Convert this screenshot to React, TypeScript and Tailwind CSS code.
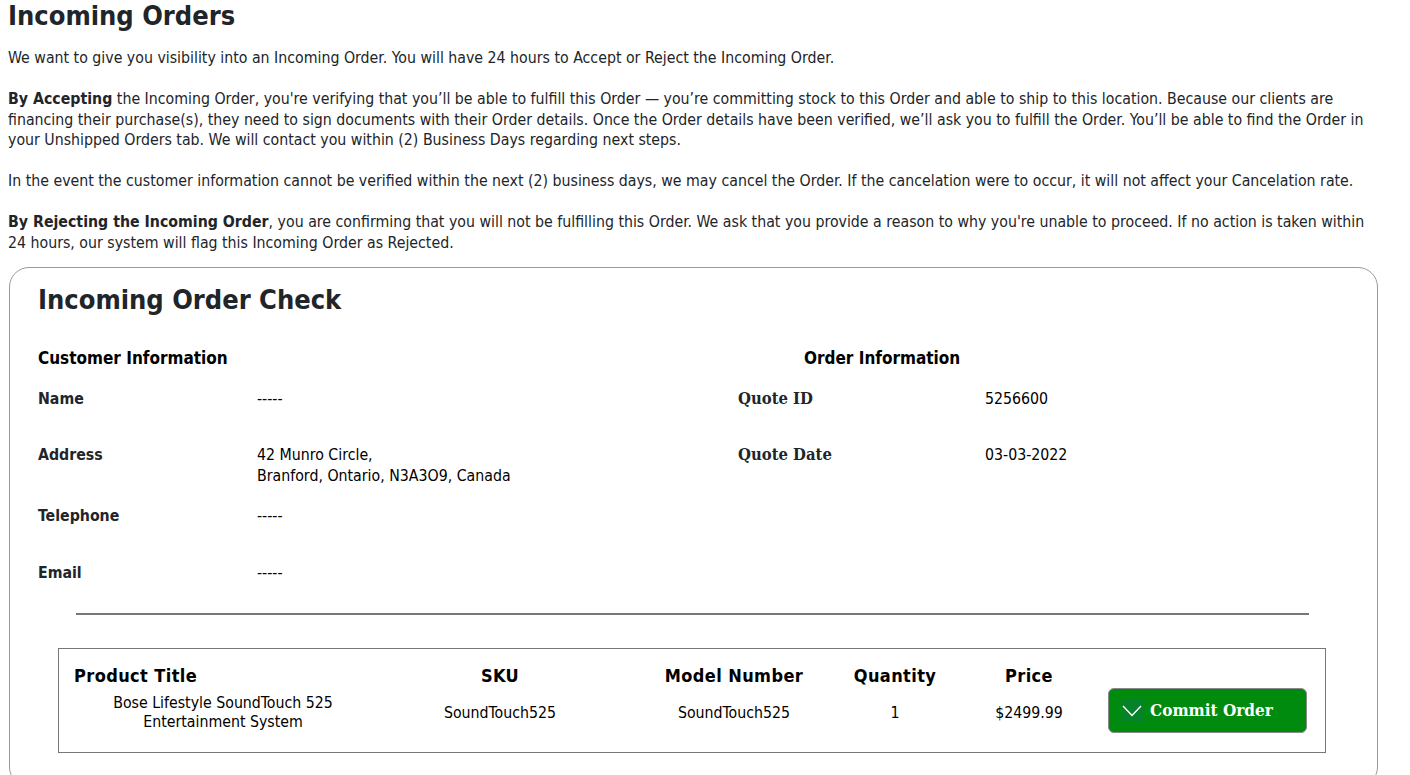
import React from "react";

const T = "font-[DejaVu_Sans_Condensed,DejaVu_Sans,sans-serif] font-stretch-condensed";
const V = "font-['DejaVu_Sans',sans-serif]";
const S = "font-['DejaVu_Serif',serif]";

function Row({ label, value, h }: { label: string; value: React.ReactNode; h: string }) {
  return (
    <div className={`flex items-start ${h}`}>
      <div className={`w-[219px] shrink-0 font-bold text-[#212529] ${T}`}>{label}</div>
      <div className={`${T} text-black`}>{value}</div>
    </div>
  );
}

export default function App() {
  return (
    <div className={`${T} bg-white min-h-[775px] text-[15.75px] leading-[20.5px] text-[#212529] pl-2 pr-[32px] w-[1410px] overflow-hidden`}>
      <h1 className={`${T} font-bold text-[27px] leading-[32px] mb-[16px]`}>Incoming Orders</h1>
      <p className="mb-[20.5px]">
        We want to give you visibility into an Incoming Order. You will have 24 hours to Accept or Reject the Incoming Order.
      </p>
      <p className="mb-[20.5px] whitespace-nowrap">
        <b>By Accepting</b> the Incoming Order, you're verifying that you’ll be able to fulfill this Order — you’re committing stock to this Order and able to ship to this location. Because our clients are
        <br />
        financing their purchase(s), they need to sign documents with their Order details. Once the Order details have been verified, we’ll ask you to fulfill the Order. You’ll be able to find the Order in
        <br />
        your Unshipped Orders tab. We will contact you within (2) Business Days regarding next steps.
      </p>
      <p className="mb-[20.5px]">
        In the event the customer information cannot be verified within the next (2) business days, we may cancel the Order. If the cancelation were to occur, it will not affect your Cancelation rate.
      </p>
      <p className="whitespace-nowrap">
        <b>By Rejecting the Incoming Order</b>, you are confirming that you will not be fulfilling this Order. We ask that you provide a reason to why you're unable to proceed. If no action is taken within
        <br />
        24 hours, our system will flag this Incoming Order as Rejected.
      </p>

      <div className="ml-[1px] mt-[14px] w-[1369px] h-[520px] border border-[#9a9a9a] rounded-[20px] pl-[28px] pr-[50px] pt-[15px]">
        <h2 className={`${T} font-bold text-[27px] leading-[34px] text-[#212529]`}>Incoming Order Check</h2>

        <div className="flex mt-[31px]">
          <div className="w-[700px]">
            <div className={`${V} font-bold text-black text-[17px] h-[41px] leading-[20px]`}>Customer Information</div>
            <Row label="Name" value="-----" h="h-[56px]" />
            <Row label="Address" value={<>42 Munro Circle,<br />Branford, Ontario, N3A3O9, Canada</>} h="h-[61px]" />
            <Row label="Telephone" value="-----" h="h-[57px]" />
            <Row label="Email" value="-----" h="h-[48px]" />
          </div>
          <div className="flex-1">
            <div className={`${V} font-bold text-black text-[17px] h-[41px] leading-[20px] pl-[66px]`}>Order Information</div>
            <div className="flex items-start h-[56px]">
              <div className={`w-[247px] shrink-0 font-bold text-[#212529] text-[16.5px] ${S}`}>Quote ID</div>
              <div className="text-black">5256600</div>
            </div>
            <div className="flex items-start h-[61px]">
              <div className={`w-[247px] shrink-0 font-bold text-[#212529] text-[16.5px] ${S}`}>Quote Date</div>
              <div className="text-black">03-03-2022</div>
            </div>
          </div>
        </div>

        <div className="ml-[38px] w-[1233px] h-[2px] bg-[#777777] mt-[2px]" />

        <div className="ml-[20px] mt-[33px] w-[1268px] border border-[#777777] pt-[17px] pb-[19px] pl-[15px]">
          <div className={`grid grid-cols-[298px_256px_212px_110px_158px_199px] ${V} font-bold text-black text-[18px] tracking-[0.4px] leading-[20.5px]`}>
            <div>Product Title</div>
            <div className="text-center">SKU</div>
            <div className="text-center">Model Number</div>
            <div className="text-center">Quantity</div>
            <div className="text-center">Price</div>
            <div />
          </div>
          <div className="grid grid-cols-[298px_256px_212px_110px_158px_199px] items-center mt-[1.5px] h-[45px] text-black">
            <div className="text-center leading-[19px] pt-[2px]">Bose Lifestyle SoundTouch 525<br />Entertainment System</div>
            <div className="text-center pt-[6px]">SoundTouch525</div>
            <div className="text-center pt-[6px]">SoundTouch525</div>
            <div className="text-center pt-[6px]">1</div>
            <div className="text-center pt-[6px]">$2499.99</div>
            <button className={`h-[45px] w-[199px] rounded-[6px] border border-[#8a8a8a] bg-[#008a0e] flex items-center pl-[12px] ${S} font-bold text-white text-[17px]`}>
              <span className="w-[22px] h-[22px] bg-[#06822a] flex items-center justify-center mr-[7px]">
                <svg width="20" height="12" viewBox="0 0 20 12" fill="none">
                  <path d="M1 1 L10 10.5 L19 1" stroke="white" strokeWidth="1.5" />
                </svg>
              </span>
              Commit Order
            </button>
          </div>
        </div>
      </div>
    </div>
  );
}
